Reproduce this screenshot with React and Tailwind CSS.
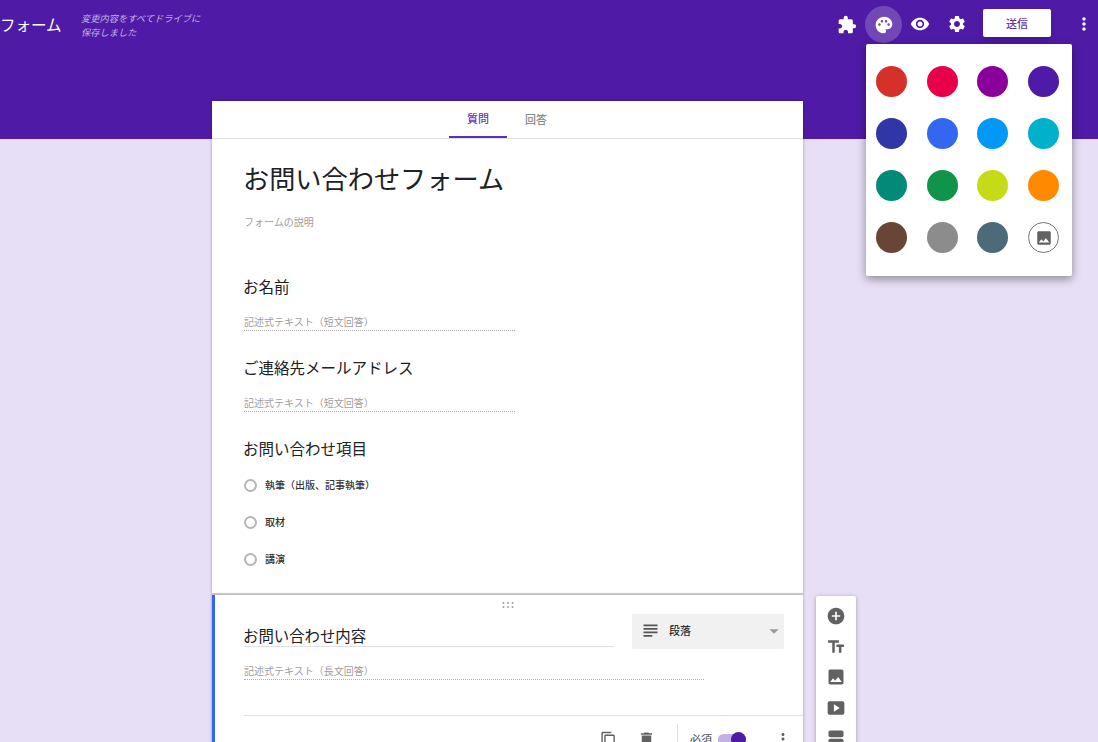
import React from 'react';
import {
  MdExtension, MdPalette, MdVisibility, MdSettings, MdMoreVert, MdAddCircle, MdTextFields,
  MdImage, MdSmartDisplay, MdViewAgenda, MdContentCopy, MdDelete, MdSubject, MdArrowDropDown,
} from 'react-icons/md';

const themeColors = [
  'bg-[#d5302a]', 'bg-[#e8004b]', 'bg-[#8a009b]', 'bg-[#4f1ba6]',
  'bg-[#3035a8]', 'bg-[#3367f0]', 'bg-[#0298f5]', 'bg-[#00b1cb]',
  'bg-[#008a77]', 'bg-[#10934a]', 'bg-[#c6db17]', 'bg-[#ff8a00]',
  'bg-[#684537]', 'bg-[#8c8c8c]', 'bg-[#4d6a79]',
];

function ShortAnswer({ title }) {
  return (
    <div className="h-[81px] pl-8">
      <h2 className="-ml-px text-[15.5px] leading-[24px] text-[#202124]">{title}</h2>
      <div className="mt-[12px] h-[21px] w-[271px] border-b border-dotted border-[#b0b0b0] pt-[3px] text-[10px] leading-[18px] text-[#9e9e9e]">
        記述式テキスト（短文回答）
      </div>
    </div>
  );
}

function Radio({ label }) {
  return (
    <div className="flex h-[37px] items-center gap-[9px]">
      <div className="h-[13px] w-[13px] rounded-full border-2 border-[#b5b5b5]"></div>
      <span className="-ml-px mb-[2px] text-[10px] font-medium text-[#333]">{label}</span>
    </div>
  );
}

function App() {
  return (
    <div className="relative h-[742px] w-[1098px] overflow-hidden bg-[#e7dff5] font-['Noto_Sans_CJK_JP',sans-serif]">
      <header className="flex h-[139px] items-start bg-[#4f1ba6]">
        <h1 className="mt-[12px] w-[81px] text-[15.5px] leading-[24px] text-white">フォーム</h1>
        <p className="mt-[11px] w-[124px] text-[9.25px] leading-[14px] italic text-[#c4b0e2]">
          変更内容をすべてドライブに保存しました
        </p>
        <div className="ml-auto mt-[6px] flex items-center pr-[4px] text-white">
          <MdExtension className="mr-[8.5px] text-[20px]" />
          <div className="flex h-[37px] w-[37px] items-center justify-center rounded-full bg-white/20">
            <MdPalette className="text-[20px]" />
          </div>
          <MdVisibility className="mb-[2px] ml-[8px] text-[20px]" />
          <MdSettings className="mb-[2px] ml-[17px] text-[20px]" />
          <button className="mb-[3px] ml-[16px] h-[28px] w-[68px] rounded-[2px] bg-white text-[11px] font-medium text-[#5f36ae] shadow-md">
            送信
          </button>
          <MdMoreVert className="mb-[2px] ml-[23px] text-[20px]" />
        </div>
      </header>

      <main className="mt-[-38px] flex items-start pl-[212px]">
        <div className="w-[591px]">
          <section className="h-[494px] border-b-2 border-[#d6d6d6] bg-white shadow-[0_0_3px_rgba(0,0,0,0.3)]">
            <div className="flex h-[38px] justify-center border-b border-[#e0e0e0] pr-[1px] text-[11px] font-medium">
              <div className="flex w-[58px] items-center justify-center border-b-2 border-[#5f2dbb] text-[#6a35c0]">質問</div>
              <div className="flex w-[58px] items-center justify-center text-[#8a8a8a]">回答</div>
            </div>
            <div className="pl-8 pt-[19px]">
              <div className="-ml-px text-[26.2px] leading-[40px] text-[#202124]">お問い合わせフォーム</div>
              <div className="mt-[15px] text-[10px] leading-[18px] text-[#9e9e9e]">フォームの説明</div>
            </div>
            <div className="mt-[43px]">
              <ShortAnswer title="お名前" />
              <ShortAnswer title="ご連絡先メールアドレス" />
              <div className="pl-8">
                <h2 className="-ml-px text-[15.5px] leading-[24px] text-[#202124]">お問い合わせ項目</h2>
                <div className="mt-[7px]">
                  <Radio label="執筆（出版、記事執筆）" />
                  <Radio label="取材" />
                  <Radio label="講演" />
                </div>
              </div>
            </div>
          </section>

          <section className="relative h-[200px] border-l-[3px] border-[#3367f0] bg-white shadow-[0_0_3px_rgba(0,0,0,0.3)]">
            <div className="flex justify-center pr-[3px] pt-[7px]">
              <svg width="12" height="6" viewBox="0 0 12 6" fill="#9e9e9e">
                <circle cx="1.5" cy="1" r="1" /><circle cx="6" cy="1" r="1" /><circle cx="10.5" cy="1" r="1" />
                <circle cx="1.5" cy="5" r="1" /><circle cx="6" cy="5" r="1" /><circle cx="10.5" cy="5" r="1" />
              </svg>
            </div>
            <div className="flex items-start pl-[29px] pt-[6px]">
              <div className="mt-[9px] h-[24px] w-[370px] border-b border-[#e0e0e0] text-[15.4px] leading-[24px] text-[#202124]">
                <p className="-ml-px">お問い合わせ内容</p>
              </div>
              <div className="ml-[18px] flex h-[35px] w-[152px] items-center rounded-[2px] bg-[#f1f1f1] pb-[2px] pl-[8px] text-[#555]">
                <MdSubject className="text-[21px]" />
                <span className="ml-[8px] text-[11px] font-medium text-[#333]">段落</span>
                <MdArrowDropDown className="ml-auto mr-[-1px] text-[22px] text-[#9a9a9a]" />
              </div>
            </div>
            <div className="ml-[29px] mt-[7px] h-[24px] w-[460px] border-b border-dotted border-[#b0b0b0] pt-[6px] text-[10px] leading-[18px] text-[#9e9e9e]">
              記述式テキスト（長文回答）
            </div>
            <div className="ml-[29px] mt-[35px] border-t border-[#e0e0e0]">
              <div className="flex h-[40px] items-center pt-[6px] text-[#616161]">
                <MdContentCopy className="ml-[356px] text-[17px]" />
                <MdDelete className="ml-[20px] text-[19px]" />
                <div className="ml-[21px] h-[30px] w-px bg-[#e0e0e0]"></div>
                <span className="ml-[12px] text-[11px] text-[#444]">必須</span>
                <div className="relative ml-[6px] h-[11px] w-[28px] rounded-full bg-[#c4b0e2]">
                  <div className="absolute right-0 top-[-2px] h-[15px] w-[15px] rounded-full bg-[#4f1ba6]"></div>
                </div>
                <MdMoreVert className="ml-[28px] text-[18px]" />
              </div>
            </div>
          </section>
        </div>

        <aside className="ml-[13px] mt-[495px] flex w-[40px] flex-col items-center gap-[10.5px] rounded-[2px] bg-white pt-[10px] pb-[20px] text-[#616161] shadow-[0_1px_4px_rgba(0,0,0,0.3)]">
          <MdAddCircle className="text-[20px]" />
          <MdTextFields className="text-[20px]" />
          <MdImage className="text-[20px]" />
          <MdSmartDisplay className="text-[20px]" />
          <MdViewAgenda className="text-[20px]" />
        </aside>
      </main>

      <div className="absolute left-[866px] top-[44px] h-[232px] w-[206px] rounded-[2px] bg-white pr-[3px] pt-[11px] shadow-[0_3px_10px_rgba(0,0,0,0.4)]">
        <div className="grid grid-cols-4 auto-rows-[52.3px]">
          {themeColors.map((color) => (
            <div key={color} className="flex h-[52px] items-center justify-center">
              <div className={`h-[31px] w-[31px] rounded-full ${color}`}></div>
            </div>
          ))}
          <div className="flex h-[52px] items-center justify-center">
            <div className="flex h-[31px] w-[31px] items-center justify-center rounded-full border border-[#757575]">
              <MdImage className="text-[18px] text-[#616161]" />
            </div>
          </div>
        </div>
      </div>
    </div>
  );
}

export default App;
